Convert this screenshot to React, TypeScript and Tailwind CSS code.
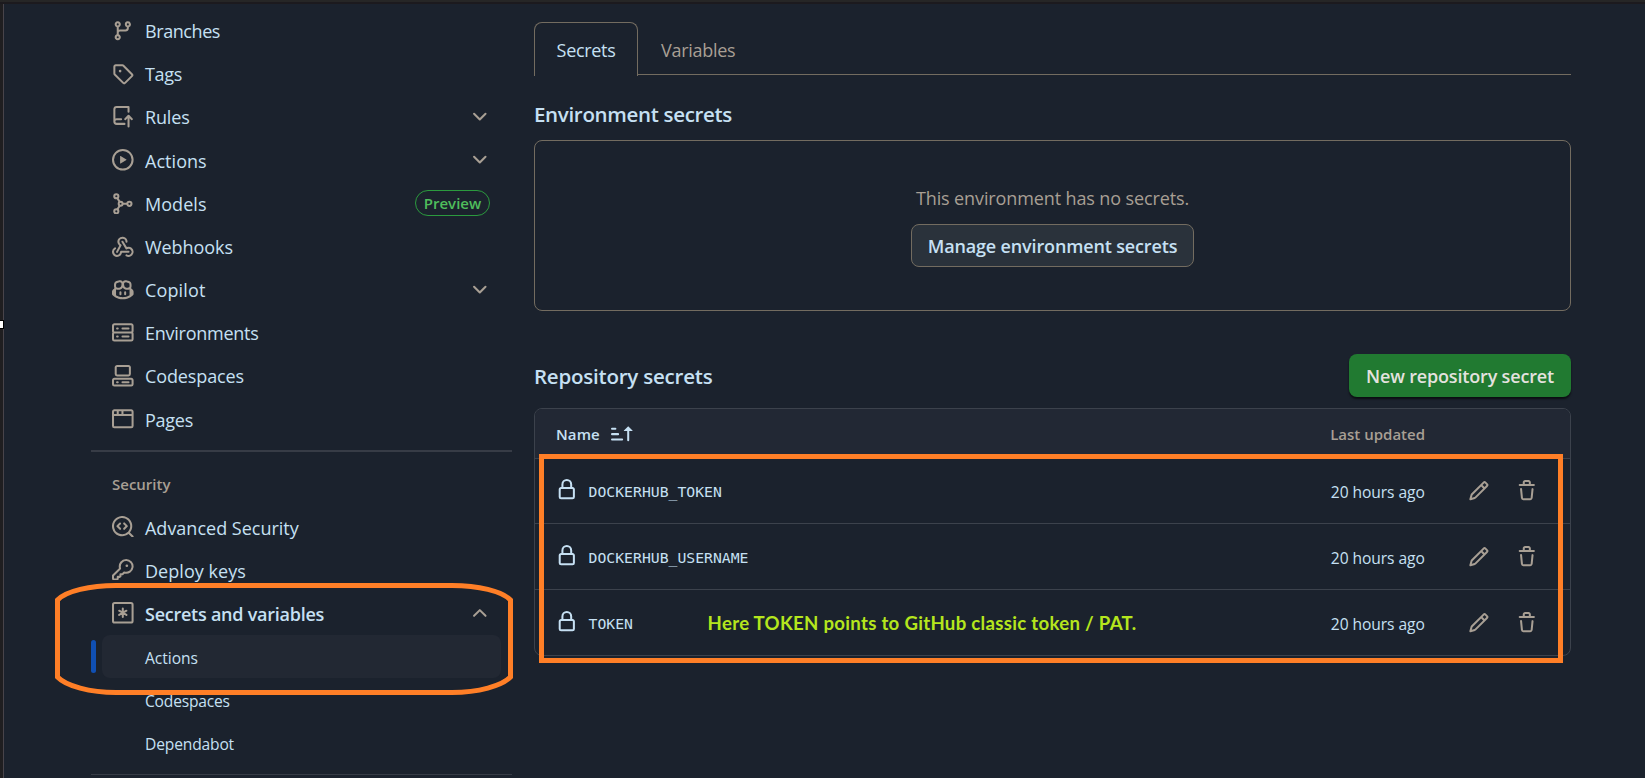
import React from "react";

const ICONS: Record<string, string[]> = {
  branch: [
    "M9.5 3.25a2.25 2.25 0 1 1 3 2.122V6A2.5 2.5 0 0 1 10 8.5H6a1 1 0 0 0-1 1v1.128a2.251 2.251 0 1 1-1.5 0V5.372a2.25 2.25 0 1 1 1.5 0v1.836A2.493 2.493 0 0 1 6 7h4a1 1 0 0 0 1-1v-.628A2.25 2.25 0 0 1 9.5 3.25Zm-6 0a.75.75 0 1 0 1.5 0 .75.75 0 0 0-1.5 0Zm8.25-.75a.75.75 0 1 0 0 1.5.75.75 0 0 0 0-1.5ZM4.25 12a.75.75 0 1 0 0 1.5.75.75 0 0 0 0-1.5Z",
  ],
  tag: [
    "M1 7.775V2.75C1 1.784 1.784 1 2.75 1h5.025c.464 0 .91.184 1.238.513l6.25 6.25a1.75 1.75 0 0 1 0 2.474l-5.026 5.026a1.75 1.75 0 0 1-2.474 0l-6.25-6.25A1.752 1.752 0 0 1 1 7.775Zm1.5 0c0 .066.026.13.073.177l6.25 6.25a.25.25 0 0 0 .354 0l5.025-5.025a.25.25 0 0 0 0-.354l-6.25-6.25a.25.25 0 0 0-.177-.073H2.75a.25.25 0 0 0-.25.25ZM6 5a1 1 0 1 1 0 2 1 1 0 0 1 0-2Z",
  ],
  push: [
    "M1 2.5A2.5 2.5 0 0 1 3.5 0h8.75a.75.75 0 0 1 .75.75v3.5a.75.75 0 0 1-1.5 0V1.5h-8a1 1 0 0 0-1 1v6.708A2.493 2.493 0 0 1 3.5 9h3.25a.75.75 0 0 1 0 1.5H3.5a1 1 0 0 0 0 2h5.75a.75.75 0 0 1 0 1.5H3.5A2.5 2.5 0 0 1 1 11.5Zm13.23 7.79h-.001l-1.224-1.224v6.184a.75.75 0 0 1-1.5 0V9.066L10.28 10.29a.75.75 0 0 1-1.06-1.061l2.505-2.504a.75.75 0 0 1 1.06 0L15.29 9.23a.751.751 0 0 1-.018 1.042.751.751 0 0 1-1.042.018Z",
  ],
  play: [
    "M8 0a8 8 0 1 1 0 16A8 8 0 0 1 8 0ZM1.5 8a6.5 6.5 0 1 0 13 0 6.5 6.5 0 0 0-13 0Zm4.879-2.773 4.264 2.559a.25.25 0 0 1 0 .428l-4.264 2.559A.25.25 0 0 1 6 10.559V5.442a.25.25 0 0 1 .379-.215Z",
  ],
  webhook: [
    "M5.5 4.25a2.25 2.25 0 0 1 4.5 0 .75.75 0 0 0 1.5 0 3.75 3.75 0 1 0-6.14 2.889l-2.272 4.258a.75.75 0 0 0 1.324.706L7 7.25a.75.75 0 0 0-.309-1.015A2.25 2.25 0 0 1 5.5 4.25Z",
    "M7.364 3.607a.75.75 0 0 1 1.03.257l2.608 4.349a3.75 3.75 0 1 1-.628 6.785.75.75 0 0 1 .752-1.299 2.25 2.25 0 1 0-.033-3.88.75.75 0 0 1-1.03-.256L7.107 4.636a.75.75 0 0 1 .257-1.03Z",
    "M2.9 8.776A.75.75 0 0 1 2.625 9.8 2.25 2.25 0 1 0 6 11.75a.75.75 0 0 1 .75-.751h5.5a.75.75 0 0 1 0 1.5H7.425a3.751 3.751 0 1 1-5.55-3.998.75.75 0 0 1 1.024.274Z",
  ],
  copilot: [
    "M7.998 15.035c-4.562 0-7.873-2.914-7.998-3.749V9.338c.085-.628.677-1.686 1.588-2.065.013-.07.024-.143.036-.218.029-.183.06-.384.126-.612-.201-.508-.254-1.084-.254-1.656 0-.87.128-1.769.693-2.484.579-.733 1.494-1.124 2.724-1.261 1.206-.134 2.262.034 2.944.765.05.053.096.108.139.165.044-.057.094-.112.143-.165.682-.731 1.738-.899 2.944-.765 1.23.137 2.145.528 2.724 1.261.566.715.693 1.614.693 2.484 0 .572-.053 1.148-.254 1.656.066.228.098.429.126.612.012.076.024.148.037.218.924.385 1.522 1.471 1.591 2.095v1.872c0 .766-3.351 3.795-8.002 3.795Zm0-1.485c2.28 0 4.584-1.11 5.002-1.433V7.862l-.023-.116c-.49.21-1.075.291-1.727.291-1.146 0-2.059-.327-2.71-.991A3.222 3.222 0 0 1 8 6.303a3.24 3.24 0 0 1-.544.743c-.65.664-1.563.991-2.71.991-.652 0-1.236-.081-1.727-.291l-.023.116v4.255c.419.323 2.722 1.433 5.002 1.433ZM6.762 2.83c-.193-.206-.637-.413-1.682-.297-1.019.113-1.479.404-1.713.7-.247.312-.369.789-.369 1.554 0 .793.129 1.171.308 1.371.162.181.519.379 1.442.379.853 0 1.339-.235 1.638-.54.315-.322.527-.827.617-1.553.117-.935-.037-1.395-.241-1.614Zm4.155-.297c-1.044-.116-1.488.091-1.681.297-.204.219-.359.679-.242 1.614.091.726.303 1.231.618 1.553.299.305.784.54 1.638.54.922 0 1.28-.198 1.442-.379.179-.2.308-.578.308-1.371 0-.765-.123-1.242-.37-1.554-.233-.296-.693-.587-1.713-.7Z",
    "M6.25 9.037a.75.75 0 0 1 .75.75v1.501a.75.75 0 0 1-1.5 0V9.787a.75.75 0 0 1 .75-.75Zm4.25.75v1.501a.75.75 0 0 1-1.5 0V9.787a.75.75 0 0 1 1.5 0Z",
  ],
  server: [
    "M1.75 1h12.5c.966 0 1.75.784 1.75 1.75v4c0 .372-.116.717-.314 1 .198.283.314.628.314 1v4a1.75 1.75 0 0 1-1.75 1.75H1.75A1.75 1.75 0 0 1 0 12.75v-4c0-.358.109-.707.314-1a1.739 1.739 0 0 1-.314-1v-4C0 1.784.784 1 1.75 1ZM1.5 2.75v4c0 .138.112.25.25.25h12.5a.25.25 0 0 0 .25-.25v-4a.25.25 0 0 0-.25-.25H1.75a.25.25 0 0 0-.25.25Zm.25 5.75a.25.25 0 0 0-.25.25v4c0 .138.112.25.25.25h12.5a.25.25 0 0 0 .25-.25v-4a.25.25 0 0 0-.25-.25ZM7 4.75A.75.75 0 0 1 7.75 4h4.5a.75.75 0 0 1 0 1.5h-4.5A.75.75 0 0 1 7 4.75ZM7.75 10h4.5a.75.75 0 0 1 0 1.5h-4.5a.75.75 0 0 1 0-1.5ZM3 4.75A.75.75 0 0 1 3.75 4h.5a.75.75 0 0 1 0 1.5h-.5A.75.75 0 0 1 3 4.75ZM3.75 10h.5a.75.75 0 0 1 0 1.5h-.5a.75.75 0 0 1 0-1.5Z",
  ],
  codespaces: [
    "M0 11.25c0-.966.784-1.75 1.75-1.75h12.5c.966 0 1.75.784 1.75 1.75v3A1.75 1.75 0 0 1 14.25 16H1.75A1.75 1.75 0 0 1 0 14.25Zm2-9.5C2 .784 2.784 0 3.75 0h8.5C13.216 0 14 .784 14 1.75v5a1.75 1.75 0 0 1-1.75 1.75h-8.5A1.75 1.75 0 0 1 2 6.75Zm1.75-.25a.25.25 0 0 0-.25.25v5c0 .138.112.25.25.25h8.5a.25.25 0 0 0 .25-.25v-5a.25.25 0 0 0-.25-.25Zm-2 9.5a.25.25 0 0 0-.25.25v3c0 .138.112.25.25.25h12.5a.25.25 0 0 0 .25-.25v-3a.25.25 0 0 0-.25-.25Z",
    "M7 12.75a.75.75 0 0 1 .75-.75h4.5a.75.75 0 0 1 0 1.5h-4.5a.75.75 0 0 1-.75-.75Zm-4 0a.75.75 0 0 1 .75-.75h.5a.75.75 0 0 1 0 1.5h-.5a.75.75 0 0 1-.75-.75Z",
  ],
  browser: [
    "M0 2.75C0 1.784.784 1 1.75 1h12.5c.966 0 1.75.784 1.75 1.75v10.5A1.75 1.75 0 0 1 14.25 15H1.75A1.75 1.75 0 0 1 0 13.25ZM14.5 6h-13v7.25c0 .138.112.25.25.25h12.5a.25.25 0 0 0 .25-.25Zm-6-3.5v2h6V2.75a.25.25 0 0 0-.25-.25ZM5 2.5v2h2v-2Zm-3.25 0a.25.25 0 0 0-.25.25V4.5h2v-2Z",
  ],
  codescan: [
    "M8.47 4.97a.75.75 0 0 0 0 1.06L9.94 7.5 8.47 8.97a.75.75 0 1 0 1.06 1.06l2-2a.75.75 0 0 0 0-1.06l-2-2a.75.75 0 0 0-1.06 0ZM6.53 6.03a.75.75 0 0 0-1.06-1.06l-2 2a.75.75 0 0 0 0 1.06l2 2a.75.75 0 1 0 1.06-1.06L5.06 7.5l1.47-1.47Z",
    "M12.246 13.307a7.501 7.501 0 1 1 1.06-1.06l2.474 2.473a.749.749 0 1 1-1.06 1.06ZM1.5 7.5a6.002 6.002 0 0 0 3.608 5.504 6.002 6.002 0 0 0 6.486-1.117.748.748 0 0 1 .292-.293A6 6 0 1 0 1.5 7.5Z",
  ],
  key: [
    "M10.5 0a5.499 5.499 0 1 1-1.288 10.848l-.932.932a.749.749 0 0 1-.53.22H7v.75a.749.749 0 0 1-.22.53l-.5.5a.749.749 0 0 1-.53.22H5v.75a.749.749 0 0 1-.22.53l-.5.5a.749.749 0 0 1-.53.22h-2A1.75 1.75 0 0 1 0 14.25v-2c0-.199.079-.389.22-.53l4.932-4.932A5.5 5.5 0 0 1 10.5 0Zm-4 5.5c-.001.431.069.86.205 1.269a.75.75 0 0 1-.181.768L1.5 12.56v1.69c0 .138.112.25.25.25h1.69l.06-.06v-1.19a.75.75 0 0 1 .75-.75h1.19l.06-.06v-1.19a.75.75 0 0 1 .75-.75h1.19l1.023-1.025a.75.75 0 0 1 .768-.18A4 4 0 1 0 6.5 5.5ZM11 6a1 1 0 1 1 0-2 1 1 0 0 1 0 2Z",
  ],
  lock: [
    "M4 4a4 4 0 0 1 8 0v2h.25c.966 0 1.75.784 1.75 1.75v5.5A1.75 1.75 0 0 1 12.25 15h-8.5A1.75 1.75 0 0 1 2 13.25v-5.5C2 6.784 2.784 6 3.75 6H4Zm8.25 3.5h-8.5a.25.25 0 0 0-.25.25v5.5c0 .138.112.25.25.25h8.5a.25.25 0 0 0 .25-.25v-5.5a.25.25 0 0 0-.25-.25ZM10.5 6V4a2.5 2.5 0 1 0-5 0v2Z",
  ],
  pencil: [
    "M11.013 1.427a1.75 1.75 0 0 1 2.474 0l1.086 1.086a1.75 1.75 0 0 1 0 2.474l-8.61 8.61c-.21.21-.47.364-.756.445l-3.251.93a.75.75 0 0 1-.927-.928l.929-3.25c.081-.286.235-.547.445-.758l8.61-8.61Zm.176 4.823L9.75 4.81l-6.286 6.287a.253.253 0 0 0-.064.108l-.558 1.953 1.953-.558a.253.253 0 0 0 .108-.064Zm1.238-3.763a.25.25 0 0 0-.354 0L10.811 3.75l1.439 1.44 1.263-1.263a.25.25 0 0 0 0-.354Z",
  ],
  trash: [
    "M11 1.75V3h2.25a.75.75 0 0 1 0 1.5H2.75a.75.75 0 0 1 0-1.5H5V1.75C5 .784 5.784 0 6.75 0h2.5C10.216 0 11 .784 11 1.75ZM4.496 6.675l.66 6.6a.25.25 0 0 0 .249.225h5.19a.25.25 0 0 0 .249-.225l.66-6.6a.75.75 0 0 1 1.492.149l-.66 6.6A1.748 1.748 0 0 1 10.595 15h-5.19a1.75 1.75 0 0 1-1.741-1.575l-.66-6.6a.75.75 0 1 1 1.492-.15ZM6.5 1.75V3h3V1.75a.25.25 0 0 0-.25-.25h-2.5a.25.25 0 0 0-.25.25Z",
  ],
  sort: [
    "m12.927 2.573 3 3A.25.25 0 0 1 15.75 6H13.5v6.75a.75.75 0 0 1-1.5 0V6H9.75a.25.25 0 0 1-.177-.427l3-3a.25.25 0 0 1 .354 0ZM0 12.25a.75.75 0 0 1 .75-.75h7.5a.75.75 0 0 1 0 1.5H.75a.75.75 0 0 1-.75-.75Zm0-4a.75.75 0 0 1 .75-.75h4.5a.75.75 0 0 1 0 1.5H.75A.75.75 0 0 1 0 8.25Zm0-4a.75.75 0 0 1 .75-.75h2.5a.75.75 0 0 1 0 1.5H.75A.75.75 0 0 1 0 4.25Z",
  ],
  chevron: [
    "M12.78 5.22a.749.749 0 0 1 0 1.06l-4.25 4.25a.749.749 0 0 1-1.06 0L3.22 6.28a.749.749 0 1 1 1.06-1.06L8 8.939l3.72-3.719a.749.749 0 0 1 1.06 0Z",
  ],
};

function Icon({ name, className = "" }: { name: string; className?: string }) {
  const cls = "block h-[21.6px] w-[21.6px] shrink-0 " + className;
  if (name === "model") {
    return (
      <svg viewBox="0 0 16 16" className={cls} fill="none" stroke="currentColor" strokeWidth="1.5" strokeLinecap="round">
        <circle cx="3.2" cy="2.4" r="1.55" />
        <circle cx="3.2" cy="13.6" r="1.55" />
        <circle cx="6.4" cy="8" r="1.45" />
        <circle cx="12.9" cy="8" r="1.55" />
        <path d="M4 3.9 5.7 6.6M4 12.1l1.7-2.7M8 8h3.2" />
      </svg>
    );
  }
  if (name === "asterisk") {
    return (
      <svg viewBox="0 0 16 16" className={cls} fill="none" stroke="currentColor" strokeWidth="1.5" strokeLinecap="round">
        <rect x=".75" y=".75" width="14.5" height="14.5" rx="1.2" />
        <path d="M8 4.9v6.2M5.3 6.45l5.4 3.1M5.3 9.55l5.4-3.1" />
      </svg>
    );
  }
  return (
    <svg viewBox="0 0 16 16" className={cls} fill="currentColor">
      {ICONS[name].map((d) => (
        <path key={d} d={d} />
      ))}
    </svg>
  );
}

function NavItem({
  icon,
  label,
  text = "pt-[2px] tracking-[-0.1px]",
  end,
}: {
  icon: string;
  label: string;
  text?: string;
  end?: React.ReactNode;
}) {
  return (
    <a className="flex h-[43.2px] items-center pr-[22px] pl-[21px]">
      <Icon name={icon} className="text-[#a89f94]" />
      <span className={"ml-[11.4px] grow whitespace-nowrap text-[18px] " + text}>{label}</span>
      {end}
    </a>
  );
}

const Down = () => <Icon name="chevron" className="mr-[-0.5px] text-[#a89f94]" />;

function Sidebar() {
  return (
    <nav className="w-[421px] shrink-0 pt-[9px]">
      <NavItem icon="branch" label="Branches" text="pt-[1px] tracking-[-0.42px]" />
      <NavItem icon="tag" label="Tags" text="pt-[1px] tracking-[-0.32px]" />
      <NavItem icon="push" label="Rules" text="pt-[1px] tracking-[-0.15px]" end={<Down />} />
      <NavItem icon="play" label="Actions" text="pt-[2px] tracking-[0.05px]" end={<Down />} />
      <NavItem
        icon="model"
        label="Models"
        text="pt-[2px] tracking-[0.05px]"
        end={
          <span className="flex h-[26px] w-[75px] items-center justify-center rounded-full border border-[#2b9a3e] text-[15px] font-semibold text-[#4fbd5c]">
            Preview
          </span>
        }
      />
      <NavItem icon="webhook" label="Webhooks" text="pt-[1px] tracking-[-0.05px]" />
      <NavItem icon="copilot" label="Copilot" text="pt-[1px] tracking-[0.15px]" end={<Down />} />
      <NavItem icon="server" label="Environments" text="pt-[1px] tracking-[-0.25px]" />
      <NavItem icon="codespaces" label="Codespaces" text="pt-[1px] tracking-[-0.11px]" />
      <NavItem icon="browser" label="Pages" text="pt-[2px] tracking-[-0.25px]" />
      <hr className="mt-[9px] h-[2px] border-0 bg-[#373c46]" />
      <h3 className="mt-[21px] mb-[10px] pl-[21px] text-[15px] leading-[22px] font-semibold text-[#a89f94]">Security</h3>
      <NavItem icon="codescan" label="Advanced Security" text="pt-[4px] tracking-[0px]" />
      <NavItem icon="key" label="Deploy keys" text="pt-[3px] tracking-[0.05px]" />
      <NavItem
        icon="asterisk"
        label="Secrets and variables"
        text="pt-[3px] font-semibold tracking-[-0.25px]"
        end={<Icon name="chevron" className="mr-[-0.5px] rotate-180 text-[#a89f94]" />}
      />
      <div className="mt-[0.6px] flex h-[43px] items-center">
        <span className="h-[33px] w-[5px] rounded-[3px] bg-[#1050b4]" />
        <a className="ml-[6px] flex h-[43px] w-[399px] items-center rounded-[8px] bg-[#222833] pt-[4px] pl-[43px] text-[15.6px] tracking-[-0.04px]">Actions</a>
      </div>
      <a className="flex h-[43.2px] items-center pt-[4px] pl-[54px] text-[15.6px] tracking-[-0.2px]">Codespaces</a>
      <a className="flex h-[43.2px] items-center pt-[4px] pl-[54px] text-[15.6px] tracking-[-0.16px]">Dependabot</a>
      <hr className="mt-[9.2px] h-px border-0 bg-[#373c46]" />
    </nav>
  );
}

function SecretRow({
  name,
  height = "h-[66px]",
  textPad = "pt-[4px]",
  children,
}: {
  name: string;
  height?: string;
  textPad?: string;
  children?: React.ReactNode;
}) {
  return (
    <div className={"flex items-center border-t border-[#3c424c] pl-[21px] " + height}>
      <Icon name="lock" className="mb-[2px]" />
      <span className={"ml-[11px] w-[119px] font-['DejaVu_Sans_Mono',monospace] text-[14.75px] whitespace-nowrap " + textPad}>{name}</span>
      <div className="grow pt-[3px]">{children}</div>
      <span className="w-[137px] pt-[4px] text-[15.6px] tracking-[-0.07px] whitespace-nowrap">20 hours ago</span>
      <Icon name="pencil" className="text-[#a89f94]" />
      <Icon name="trash" className="mr-[32px] ml-[27px] text-[#a89f94]" />
    </div>
  );
}

export default function App() {
  return (
    <div className="relative h-[778px] w-[1645px] overflow-hidden bg-[#1b222d] font-['Open_Sans','Noto_Sans',sans-serif] text-[#c6e0f3]">
      <div className="h-[2px] bg-[#262626]" />
      <div className="h-[2px] bg-[#1c1a1e]" />
      <div className="flex h-[774px]">
        <div className="w-[4px] shrink-0 border-r border-[#48444a] bg-[#1f1e20]" />
        <div className="-mt-[4px] flex pl-[87px]">
          <Sidebar />
          <main className="ml-[22px] w-[1037px] pt-[22px]">
            <div className="flex h-[53px]">
              <div className="z-10 flex h-[54px] w-[104px] items-center justify-center rounded-t-[8px] border border-b-0 border-[#736c60] pt-[2px] text-[18px] tracking-[-0.32px]">
                Secrets
              </div>
              <div className="flex grow items-center border-b border-[#736c60] pt-[4px] pl-[23px] text-[18px] tracking-[-0.28px] text-[#a89f94]">
                Variables
              </div>
            </div>
            <h2 className="mt-[23px] text-[20.5px] leading-[32px] font-semibold tracking-[-0.32px]">Environment secrets</h2>
            <section className="mt-[10px] flex h-[171px] flex-col items-center rounded-[8px] border border-[#736c60] pt-[42px]">
              <p className="text-[18px] leading-[30px] tracking-[-0.12px] text-[#a89f94]">This environment has no secrets.</p>
              <button className="mt-[11px] flex h-[43px] w-[283px] items-center justify-center rounded-[8px] border border-[#736c60] bg-[#2a323b] pt-[2px] text-[18px] font-semibold tracking-[-0.15px]">
                Manage environment secrets
              </button>
            </section>
            <div className="mt-[43px] flex h-[43px] items-center justify-between">
              <h2 className="pt-[2px] text-[20.5px] font-semibold tracking-[-0.22px]">Repository secrets</h2>
              <button className="flex h-[43px] w-[222px] items-center justify-center rounded-[8px] bg-[#217a31] pt-[2px] text-[18px] font-semibold tracking-[-0.17px] text-[#e4e2df] shadow-[0_2px_2px_rgba(0,0,0,0.6)]">
                New repository secret
              </button>
            </div>
            <section className="mt-[11px] overflow-hidden rounded-[8px] border border-[#3c424c]">
              <div className="flex h-[49px] items-center bg-[#222834] pl-[21px] text-[15px] font-semibold">
                <span className="pt-[2px] tracking-[0.1px]">Name</span>
                <Icon name="sort" className="ml-[11.5px]" />
                <span className="mr-[145px] ml-auto pt-[2px] text-[#a89f94]">Last updated</span>
              </div>
              <SecretRow name="DOCKERHUB_TOKEN" height="h-[65px]" textPad="pt-[2px]" />
              <SecretRow name="DOCKERHUB_USERNAME" />
              <SecretRow name="TOKEN">
                <span className="font-['Lato',sans-serif] text-[18.6px] font-bold tracking-[0.3px] whitespace-nowrap text-[#b5e61d]">
                  Here TOKEN points to GitHub classic token / PAT.
                </span>
              </SecretRow>
            </section>
          </main>
        </div>
      </div>

      <div className="absolute top-[320px] left-[-5px] h-[9px] w-[9px] border border-black bg-white" />
      <div className="absolute top-[454px] left-[539px] h-[209px] w-[1024px] border-[5px] border-[#ff7f27]" />
      <svg className="absolute top-[575px] left-[50px] h-[130px] w-[470px]" viewBox="50 575 470 130" fill="none" stroke="#ff7f27" strokeWidth="5">
        <path d="M57.5 600C66 591 90 585.5 116 585.5H452C478 585.5 502 591 510.5 600V677C502 686 478 692.5 452 692.5H116C90 692.5 66 686 57.5 677Z" />
      </svg>
    </div>
  );
}
